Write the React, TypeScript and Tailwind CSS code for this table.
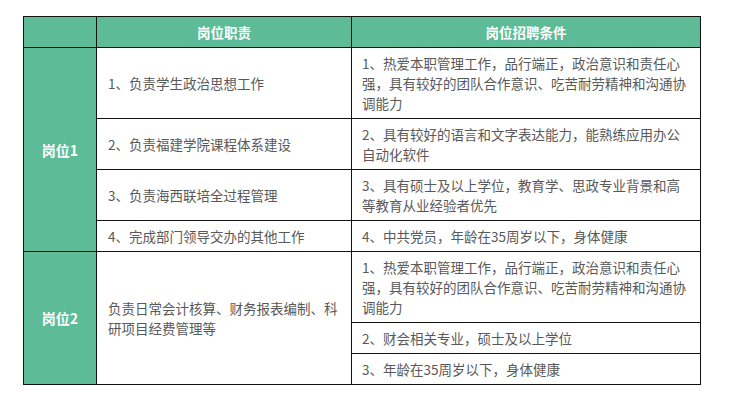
const duties1 = [
  {
    duty: "1、负责学生政治思想工作",
    req: "1、热爱本职管理工作，品行端正，政治意识和责任心强，具有较好的团队合作意识、吃苦耐劳精神和沟通协调能力",
  },
  {
    duty: "2、负责福建学院课程体系建设",
    req: "2、具有较好的语言和文字表达能力，能熟练应用办公自动化软件",
  },
  {
    duty: "3、负责海西联培全过程管理",
    req: "3、具有硕士及以上学位，教育学、思政专业背景和高等教育从业经验者优先",
  },
  {
    duty: "4、完成部门领导交办的其他工作",
    req: "4、中共党员，年龄在35周岁以下，身体健康",
  },
];

const reqs2 = [
  "1、热爱本职管理工作，品行端正，政治意识和责任心强，具有较好的团队合作意识、吃苦耐劳精神和沟通协调能力",
  "2、财会相关专业，硕士及以上学位",
  "3、年龄在35周岁以下，身体健康",
];

const cell = "border border-[#111] px-[11px] py-[5px] align-middle";
const reqCell = "border border-[#111] pl-[10px] pr-[8px] py-[5px] align-middle";
const label =
  "border border-[#111] bg-[#5dbb98] text-[14px] text-white font-bold text-center align-middle";

export default function App() {
  return (
    <div
      className="min-h-[410px] bg-white pt-[16px] pl-[23px] text-[13.5px] leading-5 text-[#595959]"
      style={{ fontFamily: '"Noto Sans CJK SC", "Noto Sans", sans-serif' }}
    >
      <table className="w-[677px] table-fixed border-collapse">
        <colgroup>
          <col className="w-[73px]" />
          <col className="w-[255px]" />
          <col className="w-[349px]" />
        </colgroup>
        <thead>
          <tr className="h-[31px] bg-[#5dbb98] text-white">
            <th className="border border-[#111]"></th>
            <th className="border border-[#111] font-bold">岗位职责</th>
            <th className="border border-[#111] font-bold">岗位招聘条件</th>
          </tr>
        </thead>
        <tbody>
          {duties1.map((row, i) => (
            <tr key={i}>
              {i === 0 && (
                <td rowSpan={4} className={label}>
                  岗位1
                </td>
              )}
              <td className={cell}>{row.duty}</td>
              <td className={reqCell}>{row.req}</td>
            </tr>
          ))}
          {reqs2.map((req, i) => (
            <tr key={i}>
              {i === 0 && (
                <>
                  <td rowSpan={3} className={label}>
                    岗位2
                  </td>
                  <td rowSpan={3} className={cell}>
                    负责日常会计核算、财务报表编制、科研项目经费管理等
                  </td>
                </>
              )}
              <td className={reqCell}>{req}</td>
            </tr>
          ))}
        </tbody>
      </table>
    </div>
  );
}
